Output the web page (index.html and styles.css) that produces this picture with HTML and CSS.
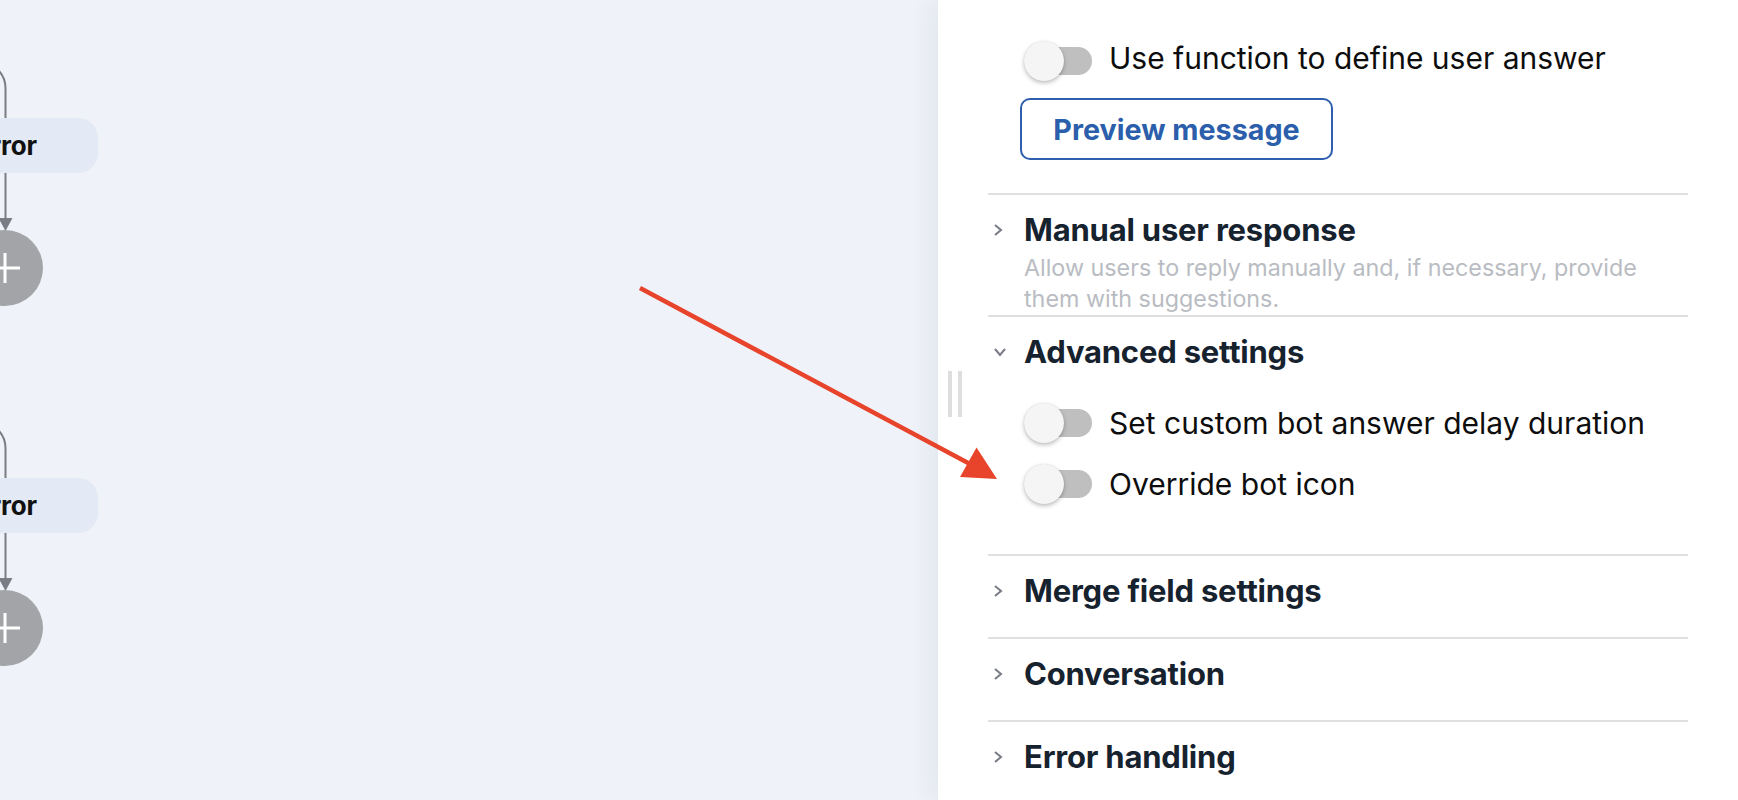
FILE: index.html
```html
<!DOCTYPE html>
<html lang="en">
<head>
<meta charset="utf-8">
<title>Bot editor</title>
<link rel="stylesheet" href="styles.css">
</head>
<body>
<div class="app">
  <div class="canvas">
    <svg class="edges" width="938" height="800" viewBox="0 0 938 800">
      <g fill="none" stroke="#7a7d83" stroke-width="2">
        <path d="M -40 62 L -20.5 62 A 26 26 0 0 1 5.5 88 L 5.5 118"/>
        <path d="M 5.5 173 L 5.5 219"/>
        <path d="M -40 422 L -20.5 422 A 26 26 0 0 1 5.5 448 L 5.5 478"/>
        <path d="M 5.5 533 L 5.5 579"/>
      </g>
      <g fill="#7a7d83">
        <polygon points="-1.5,218 12.5,218 5.5,231"/>
        <polygon points="-1.5,578 12.5,578 5.5,591"/>
      </g>
    </svg>
    <div class="node node-1"><span class="node-label">Error</span></div>
    <div class="add add-1"><svg width="32" height="32" viewBox="0 0 32 32"><path d="M16 1v30M1 16h30" stroke="#fff" stroke-width="3"/></svg></div>
    <div class="node node-2"><span class="node-label">Error</span></div>
    <div class="add add-2"><svg width="32" height="32" viewBox="0 0 32 32"><path d="M16 1v30M1 16h30" stroke="#fff" stroke-width="3"/></svg></div>
  </div>

  <aside class="panel">
    <div class="handle"><span></span><span></span></div>
    <div class="panel-inner">
      <div class="block-top">
        <div class="switch-row"><span class="switch"></span><span class="switch-label switch-label-top">Use function to define user answer</span></div>
        <button class="btn-outline" type="button">Preview message</button>
      </div>

      <section class="sec sec-manual">
        <div class="sec-head">
          <span class="chev"><svg width="12" height="16" viewBox="0 0 12 16"><polyline points="3,3 9,8 3,13" fill="none" stroke="#767b84" stroke-width="2"/></svg></span>
          <h3 class="sec-title">Manual user response</h3>
        </div>
        <p class="sec-desc">Allow users to reply manually and, if necessary, provide them with suggestions.</p>
      </section>

      <section class="sec sec-advanced">
        <div class="sec-head">
          <span class="chev"><svg width="16" height="12" viewBox="0 0 16 12"><polyline points="3,3 8,9 13,3" fill="none" stroke="#767b84" stroke-width="2"/></svg></span>
          <h3 class="sec-title">Advanced settings</h3>
        </div>
        <div class="sec-body">
          <div class="switch-row"><span class="switch"></span><span class="switch-label">Set custom bot answer delay duration</span></div>
          <div class="switch-row"><span class="switch"></span><span class="switch-label">Override bot icon</span></div>
        </div>
      </section>

      <section class="sec sec-closed">
        <div class="sec-head">
          <span class="chev"><svg width="12" height="16" viewBox="0 0 12 16"><polyline points="3,3 9,8 3,13" fill="none" stroke="#767b84" stroke-width="2"/></svg></span>
          <h3 class="sec-title">Merge field settings</h3>
        </div>
      </section>

      <section class="sec sec-closed">
        <div class="sec-head">
          <span class="chev"><svg width="12" height="16" viewBox="0 0 12 16"><polyline points="3,3 9,8 3,13" fill="none" stroke="#767b84" stroke-width="2"/></svg></span>
          <h3 class="sec-title">Conversation</h3>
        </div>
      </section>

      <section class="sec sec-closed">
        <div class="sec-head">
          <span class="chev"><svg width="12" height="16" viewBox="0 0 12 16"><polyline points="3,3 9,8 3,13" fill="none" stroke="#767b84" stroke-width="2"/></svg></span>
          <h3 class="sec-title">Error handling</h3>
        </div>
      </section>
    </div>
  </aside>
</div>

<svg class="annotation" width="1738" height="800" viewBox="0 0 1738 800">
  <line x1="640" y1="288" x2="970" y2="464" stroke="#e8432b" stroke-width="4.5"/>
  <polygon points="997,479 960,477 976.5,447.5" fill="#e8432b"/>
</svg>
</body>
</html>
```

FILE: styles.css
```css
* { box-sizing: border-box; }

html, body {
  margin: 0;
  padding: 0;
  width: 1738px;
  height: 800px;
  overflow: hidden;
  font-family: Inter, "Noto Sans", "Liberation Sans", sans-serif;
  background: #eff2f8;
}

.app {
  display: flex;
  width: 1738px;
  height: 800px;
}

/* ---------- canvas ---------- */
.canvas {
  position: relative;
  flex: 0 0 938px;
  height: 800px;
  overflow: hidden;
  background: #eff2f8;
}

.edges {
  position: absolute;
  left: 0;
  top: 0;
}

.node {
  position: absolute;
  left: -90px;
  width: 188px;
  height: 55px;
  border-radius: 20px;
  background: #e3e9f5;
  display: flex;
  align-items: center;
  justify-content: flex-end;
  padding-right: 61px;
}
.node-1 { top: 118px; }
.node-2 { top: 478px; }

.node-label {
  font-weight: 700;
  font-size: 26px;
  color: #111;
  letter-spacing: -0.2px;
}

.add {
  position: absolute;
  left: -33px;
  width: 76px;
  height: 76px;
  border-radius: 50%;
  background: #a2a4a8;
  display: flex;
  align-items: center;
  justify-content: center;
}
.add-1 { top: 230px; }
.add-2 { top: 590px; }

/* ---------- panel ---------- */
.panel {
  position: relative;
  flex: 1 1 auto;
  height: 800px;
  background: #fff;
  box-shadow: -6px 0 24px rgba(40, 50, 90, 0.07);
  padding: 0 50px;
}

.handle {
  position: absolute;
  left: 10px;
  top: 371px;
  display: flex;
  gap: 6px;
}
.handle span {
  width: 4px;
  height: 46px;
  background: #dedede;
}

.panel-inner {
  width: 700px;
}

.block-top {
  padding: 41px 0 33px 36px;
  display: flex;
  flex-direction: column;
  align-items: flex-start;
  gap: 17px;
}

.switch-row {
  display: flex;
  align-items: center;
  gap: 17px;
  height: 40px;
}

.switch {
  position: relative;
  width: 68px;
  height: 40px;
  flex: none;
}
.switch::before {
  content: "";
  position: absolute;
  left: 6px;
  top: 6px;
  width: 62px;
  height: 28px;
  border-radius: 14px;
  background: #bfbfbf;
}
.switch::after {
  content: "";
  position: absolute;
  left: 0;
  top: 0;
  width: 40px;
  height: 40px;
  border-radius: 50%;
  background: #f5f5f5;
  box-shadow: 0 2px 4px rgba(0, 0, 0, 0.25), 0 0 1px rgba(0, 0, 0, 0.15);
}

.switch-label {
  font-size: 30px;
  line-height: 36px;
  color: #0d0d0d;
  white-space: nowrap;
}
.switch-label-top {
  margin-bottom: 6px;
}

.btn-outline {
  margin-left: -4px;
  width: 313px;
  height: 62px;
  border: 2px solid #2d5fae;
  border-radius: 10px;
  background: #fff;
  color: #2b5eab;
  font-family: inherit;
  font-weight: 700;
  font-size: 28.7px;
  padding: 0;
}

.sec {
  border-top: 2px solid #e0e0e0;
}

.sec-head {
  display: flex;
  align-items: center;
  padding-top: 17px;
}

.chev {
  width: 36px;
  flex: none;
  display: flex;
  align-items: center;
  padding-left: 4px;
}

.sec-title {
  margin: 0;
  font-size: 31px;
  line-height: 36px;
  font-weight: 700;
  color: #17222f;
  letter-spacing: -0.2px;
}

.sec-desc {
  margin: 4px 0 0 36px;
  padding-bottom: 1px;
  font-size: 23.3px;
  line-height: 31px;
  color: #b9bcc2;
  width: 636px;
}

.sec-body {
  padding: 33px 0 50px 36px;
  display: flex;
  flex-direction: column;
  gap: 21px;
}

.sec-closed .sec-head {
  padding-bottom: 28px;
}

/* ---------- annotation overlay ---------- */
.annotation {
  position: absolute;
  left: 0;
  top: 0;
  pointer-events: none;
}
```
